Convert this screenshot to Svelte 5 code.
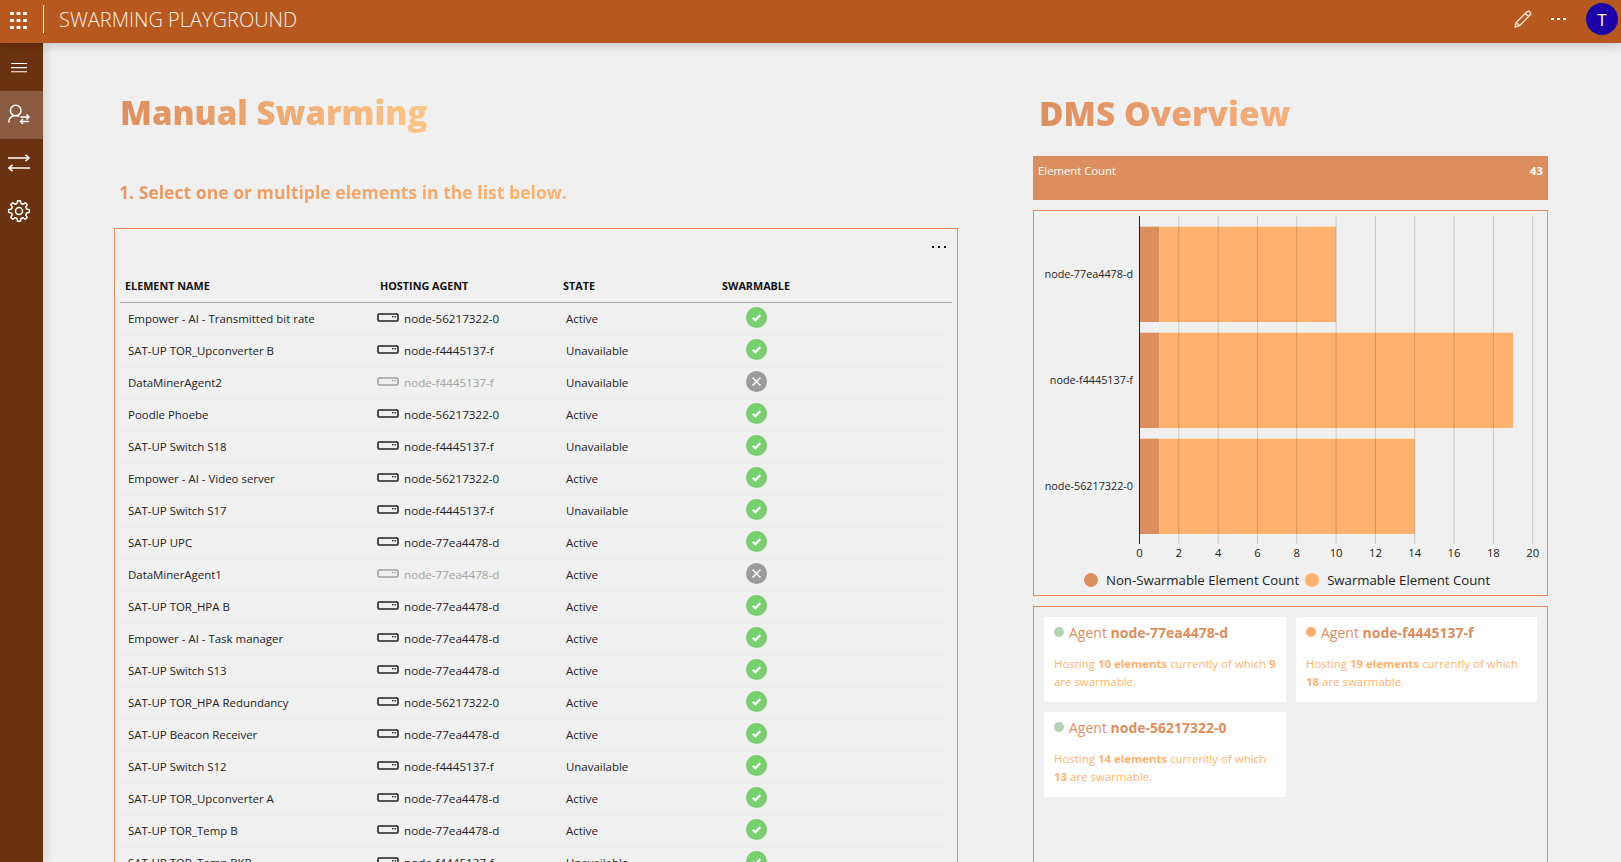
<script>
  const rows = [
    ['Empower - AI - Transmitted bit rate','node-56217322-0','Active',true],
    ['SAT-UP TOR_Upconverter B','node-f4445137-f','Unavailable',true],
    ['DataMinerAgent2','node-f4445137-f','Unavailable',false],
    ['Poodle Phoebe','node-56217322-0','Active',true],
    ['SAT-UP Switch S18','node-f4445137-f','Unavailable',true],
    ['Empower - AI - Video server','node-56217322-0','Active',true],
    ['SAT-UP Switch S17','node-f4445137-f','Unavailable',true],
    ['SAT-UP UPC','node-77ea4478-d','Active',true],
    ['DataMinerAgent1','node-77ea4478-d','Active',false],
    ['SAT-UP TOR_HPA B','node-77ea4478-d','Active',true],
    ['Empower - AI - Task manager','node-77ea4478-d','Active',true],
    ['SAT-UP Switch S13','node-77ea4478-d','Active',true],
    ['SAT-UP TOR_HPA Redundancy','node-56217322-0','Active',true],
    ['SAT-UP Beacon Receiver','node-77ea4478-d','Active',true],
    ['SAT-UP Switch S12','node-f4445137-f','Unavailable',true],
    ['SAT-UP TOR_Upconverter A','node-77ea4478-d','Active',true],
    ['SAT-UP TOR_Temp B','node-77ea4478-d','Active',true],
    ['SAT-UP TOR_Temp BKP','node-f4445137-f','Unavailable',true]
  ];
  const unit = 19.66, x0 = 105.5;
  const ticks = [0,2,4,6,8,10,12,14,16,18,20];
  const bars = [
    { name:'node-77ea4478-d', total:10, y:15.7, ly:64.5 },
    { name:'node-f4445137-f', total:19, y:121.7, ly:170 },
    { name:'node-56217322-0', total:14, y:227.7, ly:276 }
  ];
  const agents = [
    { name:'node-77ea4478-d', total:10, sw:9, dot:'#b0d3b4' },
    { name:'node-f4445137-f', total:19, sw:18, dot:'#ffab6e' },
    { name:'node-56217322-0', total:14, sw:13, dot:'#b0d3b4' }
  ];
  function gear(cx, cy, ro, ri, n) {
    let d = '';
    const step = Math.PI * 2 / n;
    for (let i = 0; i < n; i++) {
      const a = i * step - Math.PI / 2;
      const pts = [[a - step*0.17, ro],[a + step*0.17, ro],[a + step*0.33, ri],[a + step*0.67, ri]];
      for (const [t, r] of pts) {
        d += (d ? 'L' : 'M') + (cx + r*Math.cos(t)).toFixed(2) + ' ' + (cy + r*Math.sin(t)).toFixed(2);
      }
    }
    return d + 'Z';
  }
  const gearPath = gear(12, 12, 10.4, 7.8, 8);
</script>

<div class="app">
  <header class="top">
    <div class="waffle">
      <svg width="17" height="17" viewBox="0 0 17 17" fill="#fff">
        {#each [1.5,8.5,15.5] as y}{#each [2,8.5,15] as x}<rect x={x-2} y={y-1.5} width="4" height="3" rx="0.8"/>{/each}{/each}
      </svg>
    </div>
    <span class="divider"></span>
    <span class="apptitle">SWARMING PLAYGROUND</span>
    <span class="spacer"></span>
    <svg class="pencil" width="18" height="18" viewBox="0 0 18 18" fill="none" stroke="#fbe3d4" stroke-width="1.4" stroke-linejoin="round">
      <path d="M1 17l1.2-4.6L12.8 1.9a2 2 0 0 1 3.2 3.2L5.5 15.7z"/><path d="M11.4 3.4l3.2 3.2M2.4 12.4l3 3"/>
    </svg>
    <span class="tdots"><i></i><i></i><i></i></span>
    <span class="avatar">T</span>
  </header>

  <div class="below">
    <nav class="side">
      <div class="nav">
        <svg class="down" width="18" height="12" viewBox="0 0 18 12" stroke="#fff" stroke-width="1.1"><path d="M1 1.5h16M1 5.6h16M1 9.7h16"/></svg>
      </div>
      <div class="nav active">
        <svg width="24" height="24" viewBox="0 0 24 24" fill="none" stroke="#fff" stroke-width="1.5">
          <circle cx="8.7" cy="7.500" r="5.3"/><path d="M1.700 19.500c.3-4.500 3-7 7-7 1.500 0 2.500.3 3.500 1"/>
          <path d="M13.500 14h8.500M19.500 11.500l2.500 2.500-2.500 2.500M22 18.500h-8.500M16 16l-2.500 2.500 2.500 2.500" stroke-width="1.500"/>
        </svg>
      </div>
      <div class="nav">
        <svg class="down" width="24" height="20" viewBox="0 0 24 20" fill="none" stroke="#fff" stroke-width="1.6">
          <path d="M1 4h21M18.500 .8L22 4l-3.500 3.200M23 14H2M5.500 10.800L2 14l3.500 3.200"/>
        </svg>
      </div>
      <div class="nav">
        <svg width="24" height="24" viewBox="0 0 24 24" fill="none" stroke="#fff" stroke-width="1.5" stroke-linejoin="round">
          <path d={gearPath}/><circle cx="12" cy="12" r="3.500"/>
        </svg>
      </div>
    </nav>

    <main class="content">
      <section class="left">
        <h1 class="title manual">Manual Swarming</h1>
        <h2 class="step">1. Select one or multiple elements in the list below.</h2>
        <div class="panel tablepanel">
          <div class="more"><i></i><i></i><i></i></div>
          <div class="thead">
            <span class="h1">ELEMENT NAME</span>
            <span class="h2">HOSTING AGENT</span>
            <span>STATE</span>
            <span>SWARMABLE</span>
          </div>
          {#each rows as r}
            <div class="row">
              <span class="c1">{r[0]}</span>
              <span class="c2" class:off={!r[3]}>
                <svg width="22" height="9" viewBox="0 0 22 9" fill="none">
                  <rect x="1" y="1" width="20" height="7" rx="1.2" stroke="currentColor" stroke-width="1.6"/>
                  <rect x="15" y="3" width="1.4" height="1.4" fill="currentColor"/><rect x="17.500" y="3" width="1.4" height="1.4" fill="currentColor"/>
                </svg>
                {r[1]}
              </span>
              <span class="c3">{r[2]}</span>
              <span class="c4">
                {#if r[3]}
                  <svg width="21" height="21" viewBox="0 0 21 21"><circle cx="10.500" cy="10.500" r="10.500" fill="#78cf6e"/><path d="M6.700 10.800l2.700 2.500 4.900-5.300" fill="none" stroke="#fff" stroke-width="2.100"/></svg>
                {:else}
                  <svg width="21" height="21" viewBox="0 0 21 21"><circle cx="10.500" cy="10.500" r="10.500" fill="#9b9b9b"/><path d="M6.500 6.500l8 8M14.500 6.500l-8 8" fill="none" stroke="#fff" stroke-width="1.500"/></svg>
                {/if}
              </span>
            </div>
          {/each}
        </div>
      </section>

      <section class="right">
        <h1 class="title dms">DMS Overview</h1>
        <div class="count"><span>Element Count</span><b>43</b></div>
        <div class="panel chart">
          <svg class="plot" width="513" height="350" viewBox="0 0 513 350">
            {#each bars as b}
              <text class="lab cat" x="99" y={b.ly} text-anchor="end" dominant-baseline="middle">{b.name}</text>
              <rect x={x0} y={b.y} width={unit} height="95.300" fill="#dd8e5e"/>
              <rect x={x0+unit} y={b.y} width={unit*(b.total-1)} height="95.300" fill="#ffb26e"/>
            {/each}
            {#each ticks as t}
              {#if t > 0}<line x1={x0+t*unit} x2={x0+t*unit} y1="5" y2="333" stroke="#000" stroke-opacity="0.17"/>{/if}
              <text class="lab" x={x0+t*unit} y="343" text-anchor="middle" dominant-baseline="middle">{t}</text>
            {/each}
            <line x1={x0} x2={x0} y1="5" y2="333" stroke="#2a1a10"/>
          </svg>
          <div class="legend">
            <i style="background:#dd8e5e"></i><span>Non-Swarmable Element Count</span>
            <i style="background:#ffb26e"></i><span>Swarmable Element Count</span>
          </div>
        </div>
        <div class="panel agents">
          {#each agents as a}
            <article class="card">
              <div class="cardhead"><i style="background:{a.dot}"></i><span>Agent <b>{a.name}</b></span></div>
              <p>Hosting <b>{a.total} elements</b> currently of which <b>{a.sw}</b> are swarmable.</p>
            </article>
          {/each}
        </div>
      </section>
    </main>
  </div>
</div>

<style>
  :global(body) { margin: 0; background: #f0f0f0; overflow: hidden; }
  .app { width: 1621px; height: 862px; overflow: hidden; font-family: "Open Sans", "Liberation Sans", sans-serif; font-size: 11.450px; color: #222; display: flex; flex-direction: column; }
  .top { height: 43px; flex: none; background: #b7591e; display: flex; align-items: center; position: relative; z-index: 2; box-shadow: 0 2px 10px rgba(0,0,0,.2); }
  .waffle { width: 43px; display: flex; justify-content: center; padding-right: 6px; box-sizing: border-box; }
  .waffle svg { display: block; margin-top: -2px; }
  .divider { width: 1px; height: 28px; background: #fff; margin-top: -5px; }
  .apptitle { color: #fbeee6; font-size: 20px; font-weight: 300; margin: -4px 0 0 15px; }
  .spacer { flex: 1; }
  .pencil { margin: -5px 0 0 0; }
  .tdots { display: flex; gap: 3px; margin: -5px 0 0 19px; }
  .tdots i { width: 3px; height: 2px; background: #fff; }
  .avatar { width: 32px; height: 32px; border-radius: 50%; background: #1c00a8; color: #fff; font-size: 17px; display: flex; align-items: center; justify-content: center; margin: -5px 3px 0 20px; }
  .below { flex: 1; display: flex; min-height: 0; }
  .side { width: 43px; flex: none; background: #6b3211; position: relative; z-index: 1; box-shadow: 2px 0 10px rgba(0,0,0,.14); }
  .nav { height: 48px; display: flex; align-items: center; justify-content: center; padding-right: 5px; box-sizing: border-box; }
  .nav .down { margin-top: 2px; }
  .nav.active { background: #8a5a41; }
  .content { flex: 1; display: flex; min-width: 0; }
  .left { width: 844px; margin-left: 71px; flex: none; }
  .right { width: 515px; margin-left: 75px; flex: none; }
  .title { margin: 47px 0 0 6px; height: 46px; line-height: 46px; font-size: 33px; font-weight: 800; width: max-content; color: transparent; -webkit-background-clip: text; background-clip: text; }
  .manual { background-image: linear-gradient(90deg, #dd8e5e, #fcc587); }
  .dms { font-size: 33.500px; background-image: linear-gradient(90deg, #dd8e5e, #f5b07e); }
  .step { margin: 43px 0 0 5px; height: 26px; line-height: 26px; font-size: 17.600px; font-weight: 700; width: max-content; color: transparent; background-image: linear-gradient(90deg, #e8955f, #ffb26e); -webkit-background-clip: text; background-clip: text; }
  .panel { border: 1px solid #e38d5c; box-sizing: border-box; }
  .tablepanel { margin-top: 23px; padding: 0 5px; height: 700px; }
  .more { height: 35px; display: flex; justify-content: flex-end; align-items: center; gap: 4px; padding: 0 6px 0 0; }
  .more i { width: 2px; height: 2px; background: #111; }
  .thead, .row { display: grid; grid-template-columns: 257px 186px 159px 1fr; align-items: center; }
  .thead { height: 39px; padding-top: 4px; border-bottom: 1px solid #a8a8a8; font-weight: 700; font-size: 10.800px; color: #111; box-sizing: border-box; }
  .h1 { padding-left: 5px; }
  .h2 { padding-left: 3px; }
  .row { height: 32px; margin-right: 7px; border-bottom: 1px solid #ebebeb; box-sizing: border-box; }
  .c1 { padding-left: 8px; }
  .c2 { display: flex; align-items: center; gap: 5px; font-size: 11.650px; }
  .c2 svg { color: #222; margin-top: -2px; }
  .c2.off, .c2.off svg { color: #a3a3a3; }
  .c3 { padding-left: 3px; }
  .c4 { padding-left: 24px; height: 21px; margin-top: -3px; }
  .c4 svg { display: block; }
  .count { margin-top: 20px; height: 44px; background: #dd8e5e; color: #fff; display: flex; justify-content: space-between; padding: 7px 5px 0; box-sizing: border-box; line-height: 16px; }
  .count span { font-size: 11.300px; }
  .count b { font-weight: 700; font-size: 11.300px; }
  .chart { margin-top: 10px; height: 386px; }
  .plot { display: block; }
  .lab { font-size: 11.300px; fill: #222; font-family: "Open Sans", sans-serif; }
  .cat { font-size: 10.800px; }
  .legend { display: flex; align-items: center; padding: 6px 0 0 50px; font-size: 13.200px; color: #222; height: 26px; box-sizing: content-box; }
  .legend i { width: 14px; height: 14px; border-radius: 50%; margin-right: 8px; }
  .legend span + i { margin-left: 6px; }
  .agents { margin-top: 10px; height: 400px; padding: 10px; display: grid; grid-template-columns: 242px 241px; gap: 10px; align-content: start; }
  .card { background: #fff; height: 85px; border-radius: 2px; padding: 7px 10px; box-sizing: border-box; }
  .cardhead { display: flex; align-items: center; gap: 5px; color: #dd8e5e; font-size: 14px; line-height: 18px; }
  .cardhead i { width: 10px; height: 10px; border-radius: 50%; margin-top: -2px; }
  .card p { margin: 13px 0 0; color: #ffb26e; line-height: 18px; font-size: 11.450px; }
</style>
